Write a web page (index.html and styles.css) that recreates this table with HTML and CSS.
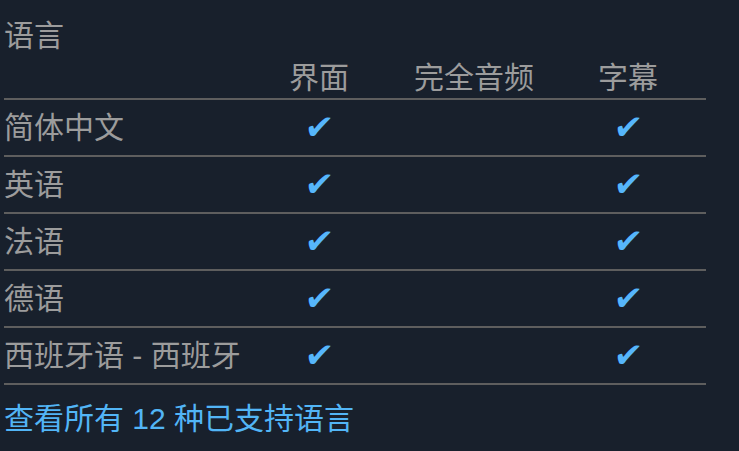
FILE: index.html
```html
<!DOCTYPE html>
<html lang="zh-CN">
<head>
<meta charset="utf-8">
<link rel="stylesheet" href="styles.css">
</head>
<body>
<div class="panel">
  <div class="title">语言</div>
  <div class="table">
    <div class="row head">
      <div class="cell name"></div>
      <div class="cell">界面</div>
      <div class="cell">完全音频</div>
      <div class="cell">字幕</div>
    </div>
    <div class="row">
      <div class="cell name">简体中文</div>
      <div class="cell"><span class="check">✔</span></div>
      <div class="cell"></div>
      <div class="cell"><span class="check">✔</span></div>
    </div>
    <div class="row">
      <div class="cell name">英语</div>
      <div class="cell"><span class="check">✔</span></div>
      <div class="cell"></div>
      <div class="cell"><span class="check">✔</span></div>
    </div>
    <div class="row">
      <div class="cell name">法语</div>
      <div class="cell"><span class="check">✔</span></div>
      <div class="cell"></div>
      <div class="cell"><span class="check">✔</span></div>
    </div>
    <div class="row">
      <div class="cell name">德语</div>
      <div class="cell"><span class="check">✔</span></div>
      <div class="cell"></div>
      <div class="cell"><span class="check">✔</span></div>
    </div>
    <div class="row">
      <div class="cell name">西班牙语 - 西班牙</div>
      <div class="cell"><span class="check">✔</span></div>
      <div class="cell"></div>
      <div class="cell"><span class="check">✔</span></div>
    </div>
  </div>
  <a class="all" href="#">查看所有 12 种已支持语言</a>
</div>
</body>
</html>
```

FILE: styles.css
```css
html, body {
  margin: 0;
  padding: 0;
  background: #18202c;
}
body {
  font-family: "Liberation Sans", "Noto Sans CJK SC", sans-serif;
  font-size: 30px;
  color: #9c9c9c;
}
.panel {
  padding: 16px 0 0 4px;
  width: 702px;
}
.title {
  line-height: 40px;
  height: 40px;
}
.table {
  display: flex;
  flex-direction: column;
}
.row {
  display: grid;
  grid-template-columns: 236px 158px 152px 156px;
  height: 55px;
  align-items: center;
  border-bottom: 2px solid #5e5e5e;
}
.row.head {
  height: 42px;
  align-items: end;
}
.cell {
  text-align: center;
  line-height: 40px;
  white-space: nowrap;
}
.cell.name {
  text-align: left;
}
.check {
  display: inline-block;
  color: #56b6fb;
  font-family: "DejaVu Sans", sans-serif;
  font-size: 34px;
  line-height: 40px;
  transform: skewX(-6deg);
}
.all {
  display: block;
  margin-top: 14px;
  color: #52b5f6;
  text-decoration: none;
  line-height: 40px;
}
```
